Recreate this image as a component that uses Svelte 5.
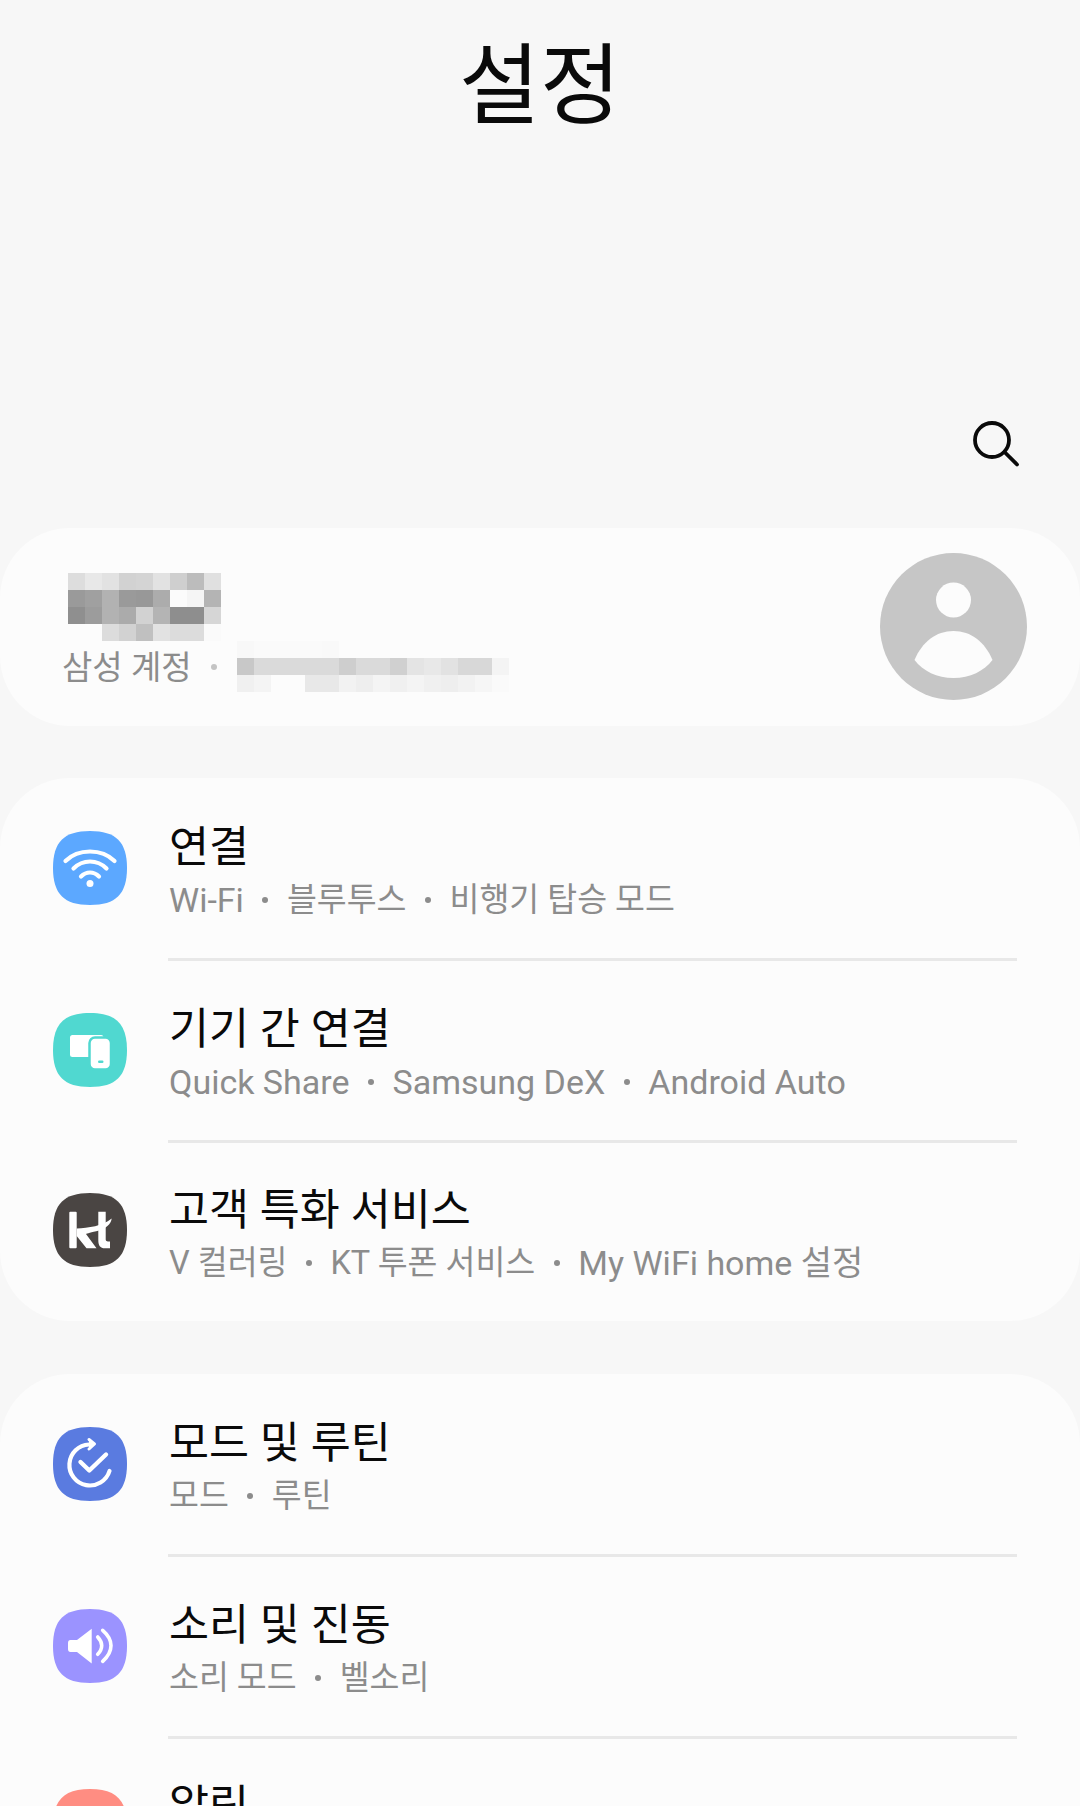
<script>
  const nameCells = [
    ['ddd', 'e8e8e8', 'e2e2e2', 'd2d2d2', 'd4d4d4', 'e2e2e2', 'cfcfcf', 'bcbcbc', 'e0e0e0'],
    ['9a9a9a', 'a0a0a0', 'b2b2b2', '9a9a9a', '989898', 'acacac', 'fbfbfb', 'f5f5f5', 'b4b4b4'],
    ['8f8f8f', '9c9c9c', 'b2b2b2', 'ababab', 'd2d2d2', 'b4b4b4', '8e8e8e', '8e8e8e', 'd6d6d6'],
    ['fcfcfc', 'fcfcfc', 'dcdcdc', 'd2d2d2', 'c0c0c0', 'e2e2e2', 'dcdcdc', 'dcdcdc', 'fafafa']
  ];
  const mailCells = [
    ['f8f8f8', 'fafafa', 'fafafa', 'fafafa', 'fafafa', 'f9f9f9', 'fcfcfc', 'fcfcfc', 'fcfcfc', 'fcfcfc', 'fcfcfc', 'fcfcfc', 'fcfcfc', 'fcfcfc', 'fcfcfc', 'fcfcfc'],
    ['c8c8c8', 'dadada', 'dadada', 'dadada', 'dadada', 'dadada', 'cecece', 'dadada', 'dadada', 'd0d0d0', 'e4e4e4', 'e8e8e8', 'e2e2e2', 'd8d8d8', 'd8d8d8', 'f4f4f4'],
    ['f0f0f0', 'f4f4f4', 'fcfcfc', 'fcfcfc', 'e8e8e8', 'e8e8e8', 'f2f2f2', 'eeeeee', 'f4f4f4', 'f0f0f0', 'f4f4f4', 'f0f0f0', 'eeeeee', 'f2f2f2', 'f6f6f6', 'fafafa']
  ];

  const groups = [
    [
      { icon: 'wifi', color: '#5ca8ff', title: '연결', subs: ['Wi-Fi', '블루투스', '비행기 탑승 모드'] },
      { icon: 'devices', color: '#50d8d0', title: '기기 간 연결', subs: ['Quick Share', 'Samsung DeX', 'Android Auto'] },
      { icon: 'kt', color: '#4a4543', title: '고객 특화 서비스', subs: ['V 컬러링', 'KT 투폰 서비스', 'My WiFi home 설정'] }
    ],
    [
      { icon: 'routine', color: '#5a7be0', title: '모드 및 루틴', subs: ['모드', '루틴'] },
      { icon: 'sound', color: '#9b93ff', title: '소리 및 진동', subs: ['소리 모드', '벨소리'] },
      { icon: 'bell', color: '#ff8d82', title: '알림', subs: ['앱 알림', '상태 표시줄'] }
    ]
  ];

  // latin words run a little wider on the device than in Roboto
  const isLatin = (s) => /[a-z]/.test(s);
</script>

<div class="screen">
  <header class="top">
    <h1>설정</h1>
    <div class="tools">
      <svg width="50" height="50" viewBox="0 0 50 50" fill="none" stroke="#0a0a0a" stroke-width="3.8" stroke-linecap="round">
        <circle cx="21" cy="21" r="17" />
        <path d="M33.5 33 L46 45.5" />
      </svg>
    </div>
  </header>

  <section class="card account">
    <div class="who">
      <div class="pixels name">
        {#each nameCells as row}
          <div class="pixrow">
            {#each row as c}<i style="background:#{c}"></i>{/each}
          </div>
        {/each}
      </div>
      <div class="line">
        <span class="label">삼성 계정</span>
        <span class="acc-dot"></span>
        <div class="pixels">
          {#each mailCells as row}
            <div class="pixrow">
              {#each row as c}<i style="background:#{c}"></i>{/each}
            </div>
          {/each}
        </div>
      </div>
    </div>
    <svg class="avatar" width="147" height="147" viewBox="0 0 147 147">
      <circle cx="73.5" cy="73.5" r="73.5" fill="#c6c6c6" />
      <circle cx="73.5" cy="47" r="17.5" fill="#fcfcfc" />
      <path d="M34.5 107 C42 89 56 78 73.5 78 C91 78 105 89 112.5 107 C104 118 90 125 73.5 125 C57 125 43 118 34.5 107 Z" fill="#fcfcfc" />
    </svg>
  </section>

  {#each groups as rows}
    <section class="card list">
      {#each rows as item, i}
        <div class="row" class:last={i === rows.length - 1}>
          <svg class="icon" width="74" height="74" viewBox="0 0 74 74">
            <path d="M37 0 C63 0 74 11 74 37 C74 63 63 74 37 74 C11 74 0 63 0 37 C0 11 11 0 37 0 Z" fill={item.color} />
            {#if item.icon === 'wifi'}
              <g fill="none" stroke="#fff" stroke-width="4.2" stroke-linecap="round">
                <path d="M12.5 30 C19.5 23 28 20.5 37 20.5 C46 20.5 54.5 23 61.5 30" />
                <path d="M20.5 37.5 C25 33 31 30.5 37 30.5 C43 30.5 49 33 53.5 37.5" />
                <path d="M28 45.5 C30.5 43 33.5 41.5 37 41.5 C40.5 41.5 43.5 43 46 45.5" />
              </g>
              <circle cx="37" cy="52.5" r="3.5" fill="#fff" />
            {:else if item.icon === 'devices'}
              <rect x="17" y="22" width="33.5" height="22" rx="2.5" fill="#fff" />
              <rect x="36.5" y="24.5" width="21.5" height="32" rx="5.5" fill="#fff" stroke={item.color} stroke-width="2.5" />
              <rect x="39.5" y="27.5" width="15.5" height="26" rx="3" fill="#fff" />
              <rect x="45" y="47.5" width="5.5" height="2.4" rx="1.2" fill={item.color} />
            {:else if item.icon === 'kt'}
              <g fill="#fff">
                <rect x="16.3" y="18.7" width="7.4" height="36.6" rx="1" />
                <path d="M23.7 35.5 C35 35 50 33 58.7 25.5 C58 31 53 35.5 46 37.5 C38 39.5 34 40.5 33 41 L43.5 55.3 L33.5 55.3 L23.7 43 Z" />
                <path d="M45.3 18.7 H52.7 V46 C52.7 48 53.5 48.5 57 48.5 V55.3 H52 C47 55.3 45.3 52.5 45.3 47 Z" />
              </g>
            {:else if item.icon === 'routine'}
              <g fill="none" stroke="#fff" stroke-linecap="round" stroke-linejoin="round">
                <path d="M36 17.5 A20.5 20.5 0 1 0 56.5 44" stroke-width="4.2" />
                <path d="M36 12.5 L41.5 17 L36 22" stroke-width="3" fill="#fff" />
                <path d="M27.5 35 L36.3 43.5 L53 27.5" stroke-width="4.4" />
              </g>
            {:else if item.icon === 'sound'}
              <path d="M17.5 31 H24 L38.7 19.7 V54.5 L24 43 H17.5 Q15 43 15 40 V34 Q15 31 17.5 31 Z" fill="#fff" />
              <g fill="none" stroke="#fff" stroke-width="3.6" stroke-linecap="round">
                <path d="M44.7 28 C47 30.5 48.7 33.5 48.7 36.5 C48.7 39.5 47 43 44.7 45.3" />
                <path d="M49.7 21.3 C54.5 25.5 58 31 58 36.5 C58 42 54.5 48 49.7 52.3" />
              </g>
            {/if}
          </svg>
          <div class="text">
            <div class="title">{item.title}</div>
            <div class="sub">
              {#each item.subs as s, j}
                {#if j > 0}<span class="dot"></span>{/if}<span class:latin={isLatin(s)}>{s}</span>
              {/each}
            </div>
          </div>
        </div>
      {/each}
    </section>
  {/each}
</div>

<style>
  :global(body) {
    background: #f7f7f7;
  }

  .screen {
    width: 1080px;
    height: 1806px;
    overflow: hidden;
    background: #f7f7f7;
    font-family: Roboto, "Noto Sans CJK KR", sans-serif;
  }

  .top {
    height: 528px;
    display: flex;
    flex-direction: column;
    justify-content: space-between;
  }

  h1 {
    margin: 32px 0 0;
    font-size: 88px;
    line-height: 108px;
    font-weight: 400;
    text-align: center;
    color: #0a0a0a;
  }

  .tools {
    display: flex;
    justify-content: flex-end;
    padding: 0 59px 59px 0;
  }

  .card {
    background: #fcfcfc;
    border-radius: 70px;
  }

  .account {
    height: 198px;
    box-sizing: border-box;
    display: flex;
    justify-content: space-between;
    align-items: center;
    padding: 0 53px 2px 62px;
    margin-bottom: 52px;
  }

  .who {
    display: flex;
    flex-direction: column;
    padding-top: 12px;
  }

  .name {
    margin-left: 6px;
  }

  .pixrow {
    display: flex;
  }

  .pixrow i {
    display: block;
    width: 17px;
    height: 17px;
  }

  .line {
    display: flex;
    align-items: center;
  }

  .label {
    font-size: 33px;
    line-height: 40px;
    margin-top: 4px;
    color: #8c8c8c;
  }

  .acc-dot {
    width: 6px;
    height: 6px;
    border-radius: 50%;
    background: #c4c4c4;
    margin: 2px 20px 0 19px;
  }

  .list {
    margin-bottom: 53px;
  }

  .row {
    height: 182px;
    box-sizing: border-box;
    display: flex;
    align-items: center;
    padding-left: 53px;
    position: relative;
  }

  .row.last {
    height: 179px;
  }

  .row:not(.last)::after {
    content: "";
    position: absolute;
    left: 168px;
    right: 63px;
    bottom: -1px;
    height: 3px;
    background: #e8e8e8;
  }

  .icon {
    flex: none;
    margin-top: -3px;
  }

  .text {
    margin-left: 42px;
    margin-top: 7px;
  }

  .title {
    font-size: 43.5px;
    line-height: 55px;
    color: #0a0a0a;
  }

  .sub {
    display: flex;
    align-items: center;
    font-size: 32.5px;
    line-height: 50px;
    color: #8c8c8c;
    white-space: nowrap;
  }

  .sub .latin {
    font-size: 34px;
  }

  .dot {
    width: 6px;
    height: 6px;
    border-radius: 50%;
    background: #8c8c8c;
    margin: 0 18.5px;
  }
</style>
